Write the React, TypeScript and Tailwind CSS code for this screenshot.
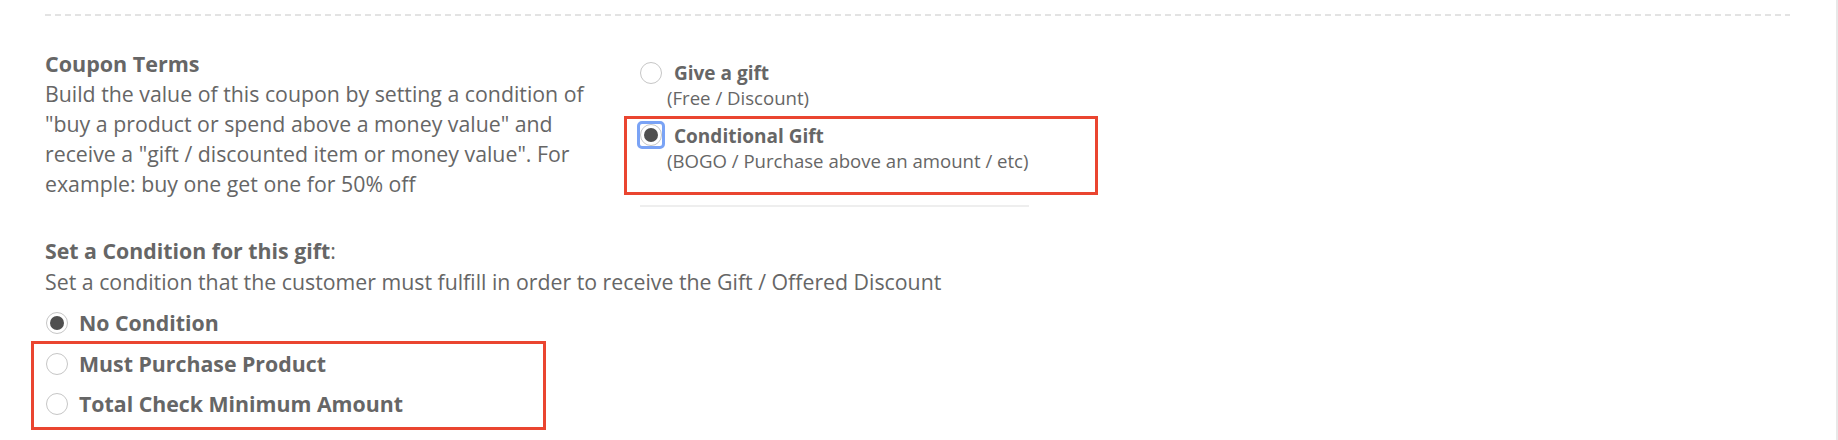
import type { ReactNode } from 'react';

function Radio({ checked = false, focused = false }: { checked?: boolean; focused?: boolean }) {
  const dot = (
    <span className="flex h-[22px] w-[22px] shrink-0 items-center justify-center rounded-full border-[1.5px] border-[#c6c6c6] bg-white">
      {checked && <span className="h-[14px] w-[14px] rounded-full bg-[#4f4f4f]" />}
    </span>
  );
  if (!focused) return dot;
  return (
    <span className="-ml-[3px] flex h-[28px] w-[28px] shrink-0 items-center justify-center rounded-[5px] border-[3px] border-[#7aa3f5]">
      {dot}
    </span>
  );
}

function Annotated({ className, children }: { className: string; children: ReactNode }) {
  // red highlight drawn around a group of options
  return <div className={`border-[3px] border-[#ea4530] ${className}`}>{children}</div>;
}

function ConditionRow({ label, checked = false, className = '' }: { label: string; checked?: boolean; className?: string }) {
  return (
    <div className={`flex items-center gap-[11px] ${className}`}>
      <Radio checked={checked} />
      <span className="text-[21.3px] font-bold leading-[40px]">{label}</span>
    </div>
  );
}

export default function App() {
  return (
    <div className="h-[440px] w-[1838px] border-r-2 border-[#e8e8e8] bg-white font-['Open_Sans',sans-serif] text-[#666]">
      {/* section divider */}
      <div className="ml-[45px] h-[2px] w-[1745px] translate-y-[14px] bg-[repeating-linear-gradient(to_right,#e3e3e3_0_6px,transparent_6px_10px)]" />

      <div className="mt-[47px] flex items-start pl-[45px]">
        <div className="w-[560px] text-[21.3px] leading-[30px]">
          <div className="text-[21.5px] font-bold">Coupon Terms</div>
          <p>
            Build the value of this coupon by setting a condition of "buy a product or spend above a money value" and
            receive a "gift / discounted item or money value". For example: buy one get one for 50% off
          </p>
        </div>

        <div className="ml-[19px] mt-[11px] flex flex-col">
          <div className="flex items-center gap-[12px] pl-[16px]">
            <Radio />
            <span className="text-[19px] font-bold leading-[26px]">Give a gift</span>
          </div>
          <div className="pl-[43px] text-[18.6px] leading-[24px]">(Free / Discount)</div>

          <Annotated className="mt-[6px] w-[474px] pb-[19px] pl-[13px] pt-[2px]">
            <div className="flex items-start gap-[9px]">
              <Radio checked focused />
              <span className="pt-[2px] text-[19px] font-bold leading-[26px]">Conditional Gift</span>
            </div>
            <div className="pl-[27px] text-[18.6px] leading-[24px]">(BOGO / Purchase above an amount / etc)</div>
          </Annotated>

          <div className="ml-[16px] mt-[10px] h-[2px] w-[389px] bg-[#eeeeee]" />
        </div>
      </div>

      <div className="mt-[28px] pl-[45px] text-[21.3px] leading-[31px]">
        <div>
          <span className="font-bold">Set a Condition for this gift</span>:
        </div>
        <div>Set a condition that the customer must fulfill in order to receive the Gift / Offered Discount</div>

        <div className="mt-[7px] pl-[1px]">
          <ConditionRow label="No Condition" checked className="h-[37px]" />
          <Annotated className="-ml-[15px] w-[515px] pb-[3px] pl-[12px]">
            <ConditionRow label="Must Purchase Product" />
            <ConditionRow label="Total Check Minimum Amount" />
          </Annotated>
        </div>
      </div>
    </div>
  );
}
